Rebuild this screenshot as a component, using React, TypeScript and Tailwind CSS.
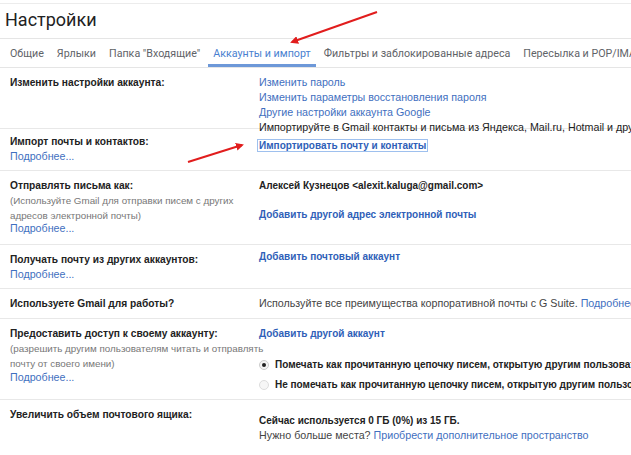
import React from 'react';

const tabs = ['Общие', 'Ярлыки', 'Папка "Входящие"', 'Аккаунты и импорт', 'Фильтры и заблокированные адреса', 'Пересылка и POP/IMAP'];

function Row({ h, left, right }: { h: string; left: React.ReactNode; right: React.ReactNode }) {
    return (
        <div className={`flex border-b border-[#e8e8e8] pt-[7px] ${h}`}>
            <div className="w-[259px] shrink-0 pl-[10px] whitespace-nowrap">{left}</div>
            <div className="flex-1 whitespace-nowrap">{right}</div>
        </div>
    );
}

const Label = ({ children }: { children: React.ReactNode }) => (
    <div className="font-bold text-[10.2px] text-[#222]">{children}</div>
);
const More = () => <div className="text-[#3f6fc0]">Подробнее...</div>;
const Note = ({ children }: { children: React.ReactNode }) => (
    <div className="text-[9.8px] text-[#777] leading-[15px]">{children}</div>
);

export default function App() {
    return (
        <div
            className="relative w-[631px] h-[455px] overflow-hidden bg-white text-[10.7px] leading-[15px] text-[#222]"
            style={{ fontFamily: 'Arial, "Liberation Sans", sans-serif' }}
        >
            <div className="mt-[3px] border-t border-[#ececec]" />
            <div className="h-[34px] pl-[5px] pt-[6px] text-[18px] leading-[20px] text-[#222] font-['Roboto',sans-serif]">
                Настройки
            </div>
            <div className="flex h-[30px] border-y border-[#e5e5e5] pl-[10px] gap-[13px] whitespace-nowrap font-['Roboto',sans-serif] text-[10.7px] text-[#5f6368]">
                {tabs.map((t) => (
                    <div
                        key={t}
                        className={
                            t === 'Аккаунты и импорт'
                                ? 'flex items-center px-[5px] -mx-[5px] border-b-[3px] border-[#6d98d8] pt-[3px] text-[#4a7fd0]'
                                : 'flex items-center'
                        }
                    >
                        {t}
                    </div>
                ))}
            </div>

            <Row
                h="h-[61px]"
                left={<Label>Изменить настройки аккаунта:</Label>}
                right={
                    <div>
                        <div className="text-[#3f6fc0]">Изменить пароль</div>
                        <div className="text-[#3f6fc0]">Изменить параметры восстановления пароля</div>
                        <div className="text-[#3f6fc0]">Другие настройки аккаунта Google</div>
                        <div>Импортируйте в Gmail контакты и письма из Яндекса, Mail.ru, Hotmail и других сервисов</div>
                    </div>
                }
            />
            <Row
                h="h-[42px]"
                left={
                    <div className="-mt-[2px]">
                        <Label>Импорт почты и контактов:</Label>
                        <More />
                    </div>
                }
                right={
                    <div className="pt-[2px] -ml-[1px]">
                        <span className="font-bold text-[10px] text-[#2f5fb8] outline outline-1 outline-[#9ec0ee] px-[1px]">
                            Импортировать почту и контакты
                        </span>
                    </div>
                }
            />
            <Row
                h="h-[74px]"
                left={
                    <div>
                        <Label>Отправлять письма как:</Label>
                        <Note>(Используйте Gmail для отправки писем с других</Note>
                        <Note>адресов электронной почты)</Note>
                        <div className="-mt-[2px]"><More /></div>
                    </div>
                }
                right={
                    <div className="text-[10px] font-bold">
                        <div>Алексей Кузнецов &lt;alexit.kaluga@gmail.com&gt;</div>
                        <div className="mt-[14px] text-[#2f5fb8]">Добавить другой адрес электронной почты</div>
                    </div>
                }
            />
            <Row
                h="h-[44px]"
                left={
                    <div>
                        <Label>Получать почту из других аккаунтов:</Label>
                        <More />
                    </div>
                }
                right={<div className="-mt-[3px] text-[10px] font-bold text-[#2f5fb8]">Добавить почтовый аккаунт</div>}
            />
            <Row
                h="h-[30px]"
                left={<Label>Используете Gmail для работы?</Label>}
                right={
                    <div className="text-[#444]">
                        Используйте все преимущества корпоративной почты с G Suite.{' '}
                        <span className="text-[#3f6fc0]">Подробнее</span>
                    </div>
                }
            />
            <Row
                h="h-[81px]"
                left={
                    <div>
                        <Label>Предоставить доступ к своему аккаунту:</Label>
                        <Note>(разрешить другим пользователям читать и отправлять</Note>
                        <Note>почту от своего имени)</Note>
                        <div className="-mt-[1px]"><More /></div>
                    </div>
                }
                right={
                    <div className="text-[10px] font-bold">
                        <div className="text-[#2f5fb8]">Добавить другой аккаунт</div>
                        <div className="mt-[16px] flex items-center gap-[6px]">
                            <span className="flex h-[10px] w-[10px] items-center justify-center rounded-full border border-[#ccc] bg-[#f4f4f4]">
                                <span className="h-[4px] w-[4px] rounded-full bg-[#222]" />
                            </span>
                            Помечать как прочитанную цепочку писем, открытую другим пользователем
                        </div>
                        <div className="mt-[5px] flex items-center gap-[6px]">
                            <span className="h-[10px] w-[10px] rounded-full border border-[#ddd] bg-[#f6f6f6]" />
                            Не помечать как прочитанную цепочку писем, открытую другим пользователем
                        </div>
                    </div>
                }
            />
            <div className="flex pt-[7px]">
                <div className="w-[259px] shrink-0 pl-[10px]">
                    <Label>Увеличить объем почтового ящика:</Label>
                </div>
                <div className="flex-1 whitespace-nowrap pt-[6px]">
                    <div className="text-[10px] font-bold">Сейчас используется 0 ГБ (0%) из 15 ГБ.</div>
                    <div className="text-[#444]">
                        Нужно больше места? <span className="text-[#3f6fc0]">Приобрести дополнительное пространство</span>
                    </div>
                </div>
            </div>

            <svg className="absolute left-0 top-0 pointer-events-none" width="631" height="455">
                <defs>
                    <marker id="ah" markerWidth="8" markerHeight="8" refX="6" refY="4" orient="auto" markerUnits="userSpaceOnUse">
                        <path d="M0,0 L8,4 L0,8 z" fill="#e11d1d" />
                    </marker>
                </defs>
                <line x1="377" y1="12" x2="292" y2="42" stroke="#e11d1d" strokeWidth="2" markerEnd="url(#ah)" />
                <line x1="188" y1="162" x2="242" y2="145" stroke="#e11d1d" strokeWidth="2" markerEnd="url(#ah)" />
            </svg>
        </div>
    );
}
